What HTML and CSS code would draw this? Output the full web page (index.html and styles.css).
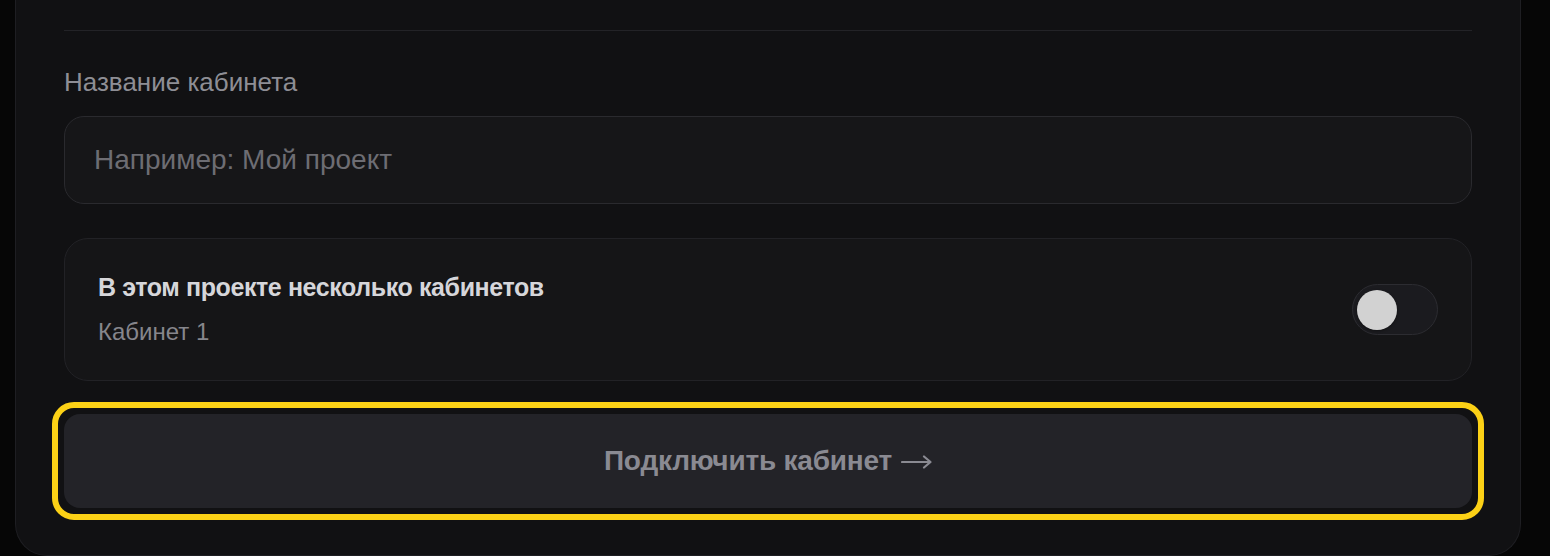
FILE: index.html
```html
<!DOCTYPE html>
<html lang="ru">
<head>
<meta charset="utf-8">
<title>Подключение кабинета</title>
<link rel="stylesheet" href="styles.css">
</head>
<body>
<main class="page">
  <section class="card">
    <hr class="divider">
    <label class="field-label" for="cabinet-name">Название кабинета</label>
    <input id="cabinet-name" class="text-input" type="text" placeholder="Например: Мой проект">
    <div class="multi">
      <div class="multi-text">
        <div class="multi-title">В этом проекте несколько кабинетов</div>
        <div class="multi-sub">Кабинет 1</div>
      </div>
      <div class="toggle" role="switch" aria-checked="false"><span class="knob"></span></div>
    </div>
    <div class="focus-ring">
      <button class="submit" type="button">Подключить кабинет
        <svg class="arrow" width="31" height="14" viewBox="0 0 31 14" aria-hidden="true"><path d="M1 7H29M23 1.5L29.5 7L23 12.5" fill="none" stroke="currentColor" stroke-width="2.2" stroke-linecap="round" stroke-linejoin="round"/></svg>
      </button>
    </div>
  </section>
</main>
</body>
</html>
```

FILE: styles.css
```css
html, body {
  margin: 0;
  padding: 0;
  background: #060606;
  height: 556px;
  overflow: hidden;
}

body {
  font-family: "Liberation Sans", Arial, sans-serif;
}

.page {
  display: flex;
  padding-left: 15px;
}

.card {
  width: 1506px;
  box-sizing: border-box;
  background: #111113;
  border: 1px solid #1e1e22;
  border-top: 0;
  border-radius: 0 0 32px 32px;
  padding: 30px 48px 35px;
  display: flex;
  flex-direction: column;
}

.divider {
  border: 0;
  height: 1px;
  background: #232327;
  margin: 0 0 33px;
}

.field-label {
  font-size: 26px;
  line-height: 36px;
  color: #8e8e95;
  margin-bottom: 16px;
}

.text-input {
  height: 88px;
  box-sizing: border-box;
  background: #161618;
  border: 1px solid #2a2a2e;
  border-radius: 20px;
  padding: 0 29px;
  font-family: "Liberation Sans", Arial, sans-serif;
  font-size: 28px;
  color: #d6d6da;
  outline: none;
}

.text-input::placeholder {
  color: #6d6d73;
}

.multi {
  margin-top: 34px;
  display: flex;
  align-items: center;
  justify-content: space-between;
  background: #151517;
  border: 1px solid #222226;
  border-radius: 24px;
  padding: 32px 33px 32px 33px;
}

.multi-title {
  font-size: 25px;
  line-height: 32px;
  font-weight: 700;
  color: #d6d6da;
  letter-spacing: -0.4px;
}

.multi-sub {
  margin-top: 13px;
  font-size: 24px;
  line-height: 32px;
  color: #86868c;
}

.toggle {
  width: 86px;
  height: 51px;
  box-sizing: border-box;
  border: 1.5px solid #2c2c31;
  background: #1b1b1f;
  border-radius: 26px;
  display: flex;
  align-items: center;
  padding-left: 4px;
}

.knob {
  width: 40px;
  height: 40px;
  border-radius: 50%;
  background: #d2d2d2;
  box-shadow: 0 1px 3px rgba(0, 0, 0, 0.4);
}

.focus-ring {
  margin: 21px -12px 0;
  border: 6px solid #fcd116;
  border-radius: 22px;
  padding: 6px;
}

.submit {
  display: flex;
  align-items: center;
  justify-content: center;
  gap: 9px;
  width: 100%;
  height: 94px;
  border: 0;
  border-radius: 16px;
  background: #232328;
  color: #8a8a92;
  font-family: "Liberation Sans", Arial, sans-serif;
  font-size: 28px;
  font-weight: 700;
  letter-spacing: -0.2px;
  cursor: pointer;
}

.arrow {
  display: block;
  margin-top: 1px;
}
```
